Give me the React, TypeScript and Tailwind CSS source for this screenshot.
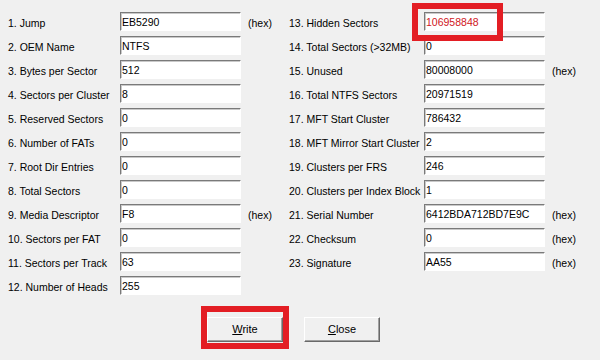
const left: [string, string, boolean][] = [
  ["1. Jump", "EB5290", true],
  ["2. OEM Name", "NTFS", false],
  ["3. Bytes per Sector", "512", false],
  ["4. Sectors per Cluster", "8", false],
  ["5. Reserved Sectors", "0", false],
  ["6. Number of FATs", "0", false],
  ["7. Root Dir Entries", "0", false],
  ["8. Total Sectors", "0", false],
  ["9. Media Descriptor", "F8", true],
  ["10. Sectors per FAT", "0", false],
  ["11. Sectors per Track", "63", false],
  ["12. Number of Heads", "255", false],
];

const right: [string, string, boolean][] = [
  ["13. Hidden Sectors", "106958848", false],
  ["14. Total Sectors (>32MB)", "0", false],
  ["15. Unused", "80008000", true],
  ["16. Total NTFS Sectors", "20971519", false],
  ["17. MFT Start Cluster", "786432", false],
  ["18. MFT Mirror Start Cluster", "2", false],
  ["19. Clusters per FRS", "246", false],
  ["20. Clusters per Index Block", "1", false],
  ["21. Serial Number", "6412BDA712BD7E9C", true],
  ["22. Checksum", "0", true],
  ["23. Signature", "AA55", true],
];

function Field({ value, red }: { value: string; red?: boolean }) {
  return (
    <div
      className={
        "h-[19px] w-[121px] border border-t-[#7a7a7a] border-l-[#7a7a7a] border-r-white border-b-white bg-white pl-[1px] leading-[18px] shadow-[inset_1px_1px_0_#c9c9c9] " +
        (red ? "text-[#d0161c]" : "text-black")
      }
    >
      {value}
    </div>
  );
}

function Row({ label, value, hex, labelW, red }: { label: string; value: string; hex: boolean; labelW: string; red?: boolean }) {
  return (
    <div className="flex h-[24px] items-start">
      <div className={labelW + " pt-[5px] leading-[13px]"}>{label}</div>
      <Field value={value} red={red} />
      {hex && <div className="ml-[7px] pt-[5px] leading-[13px]">(hex)</div>}
    </div>
  );
}

function Btn({ children }: { children: React.ReactNode }) {
  return (
    <button className="h-[25px] w-[76px] border border-t-white border-l-white border-r-[#696969] border-b-[#696969] bg-[#f0f0f0] text-[11px] text-black shadow-[inset_-1px_-1px_0_#a0a0a0]">
      {children}
    </button>
  );
}

export default function App() {
  return (
    <div className="relative h-[360px] w-[600px] overflow-hidden bg-[#f0f0f0] font-['Liberation_Sans',Arial,sans-serif] text-[10.5px] text-black">
      <div className="flex pl-[8px] pt-[12px]">
        <div className="w-[281px]">
          {left.map(([l, v, h]) => (
            <Row key={l} label={l} value={v} hex={h} labelW="w-[112px]" />
          ))}
        </div>
        <div>
          {right.map(([l, v, h], i) => (
            <Row key={l} label={l} value={v} hex={h} labelW="w-[135px]" red={i === 0} />
          ))}
        </div>
      </div>

      <div className="mt-[17px] flex gap-[21px] pl-[207px]">
        <Btn>
          <span className="underline">W</span>rite
        </Btn>
        <Btn>
          <span className="underline">C</span>lose
        </Btn>
      </div>

      {/* red highlight callouts drawn over the dialog */}
      <div className="absolute left-[412px] top-[3px] h-[38px] w-[91px] border-[6px] border-[#e31e24]" />
      <div className="absolute left-[201px] top-[306px] h-[43px] w-[88px] border-[6px] border-[#e31e24]" />
    </div>
  );
}
